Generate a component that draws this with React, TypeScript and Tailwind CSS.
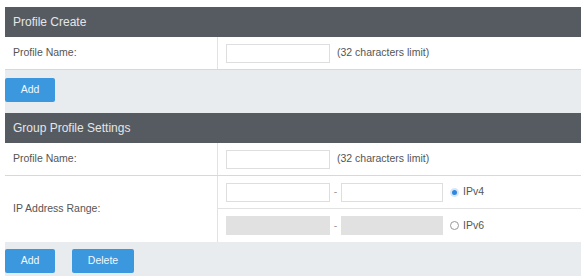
import React from "react";

const font = { fontFamily: '"Liberation Sans", Arial, sans-serif' };

function Header({ title }: { title: string }) {
  return (
    <div className="h-[30px] bg-[#555b61] flex items-center px-[8px] text-[12px] text-[#e4e6e8]">
      {title}
    </div>
  );
}

function TextInput({ disabled, w = "w-[104px]" }: { disabled?: boolean; w?: string }) {
  return (
    <div
      className={`${w} h-[19px] border ${
        disabled ? "bg-[#e1e1e1] border-[#e1e1e1]" : "bg-white border-[#dedede]"
      }`}
    />
  );
}

function Btn({ label, w }: { label: string; w: string }) {
  return (
    <div
      className={`${w} h-[24px] rounded-[2px] bg-[#3b98de] text-[#f2f7fc] text-[10.5px] flex items-center justify-center`}
    >
      {label}
    </div>
  );
}

export default function App() {
  return (
    <div className="w-[584px] h-[276px] bg-white overflow-hidden" style={font}>
      <div className="pt-[7px] pl-[5px] w-[581px]">
        <Header title="Profile Create" />
        <div className="flex h-[33px] bg-white border-b border-[#d8d8d8]">
          <div className="w-[213px] border-r border-[#e2e2e2] flex items-center px-[8px] text-[10.5px] text-[#555]">
            Profile Name:
          </div>
          <div className="flex-1 flex items-center pl-[8px] gap-[7px] text-[10.5px] text-[#555]">
            <TextInput />
            <span>(32 characters limit)</span>
          </div>
        </div>
        <div className="h-[43px] bg-[#e9ecef] pt-[8px]">
          <Btn label="Add" w="w-[50px]" />
        </div>
        <Header title="Group Profile Settings" />
        <div className="flex h-[33px] bg-white border-b border-[#d8d8d8]">
          <div className="w-[213px] border-r border-[#e2e2e2] flex items-center px-[8px] text-[10.5px] text-[#555]">
            Profile Name:
          </div>
          <div className="flex-1 flex items-center pl-[8px] gap-[7px] text-[10.5px] text-[#555]">
            <TextInput />
            <span>(32 characters limit)</span>
          </div>
        </div>
        <div className="flex h-[66px] bg-white">
          <div className="w-[213px] border-r border-[#e2e2e2] flex items-center px-[8px] text-[10.5px] text-[#555]">
            IP Address Range:
          </div>
          <div className="flex-1 flex flex-col">
            <div className="h-[33px] border-b border-[#e2e2e2] flex items-center pl-[8px] text-[10.5px] text-[#555]">
              <TextInput />
              <span className="w-[11px] text-center text-[#999]">-</span>
              <TextInput w="w-[102px]" />
              <span className="ml-[7px] w-[9px] h-[9px] rounded-full bg-[#2f86e0] border-[2px] border-[#d7e7f7]" />
              <span className="ml-[4px]">IPv4</span>
            </div>
            <div className="h-[33px] flex items-center pl-[8px] text-[10.5px] text-[#555]">
              <TextInput disabled />
              <span className="w-[11px] text-center text-[#999]">-</span>
              <TextInput disabled w="w-[102px]" />
              <span className="ml-[7px] w-[9px] h-[9px] rounded-full bg-white border border-[#999]" />
              <span className="ml-[4px]">IPv6</span>
            </div>
          </div>
        </div>
        <div className="h-[40px] bg-[#e9ecef] pt-[7px] flex gap-[17px]">
          <Btn label="Add" w="w-[50px]" />
          <Btn label="Delete" w="w-[62px]" />
        </div>
      </div>
    </div>
  );
}
